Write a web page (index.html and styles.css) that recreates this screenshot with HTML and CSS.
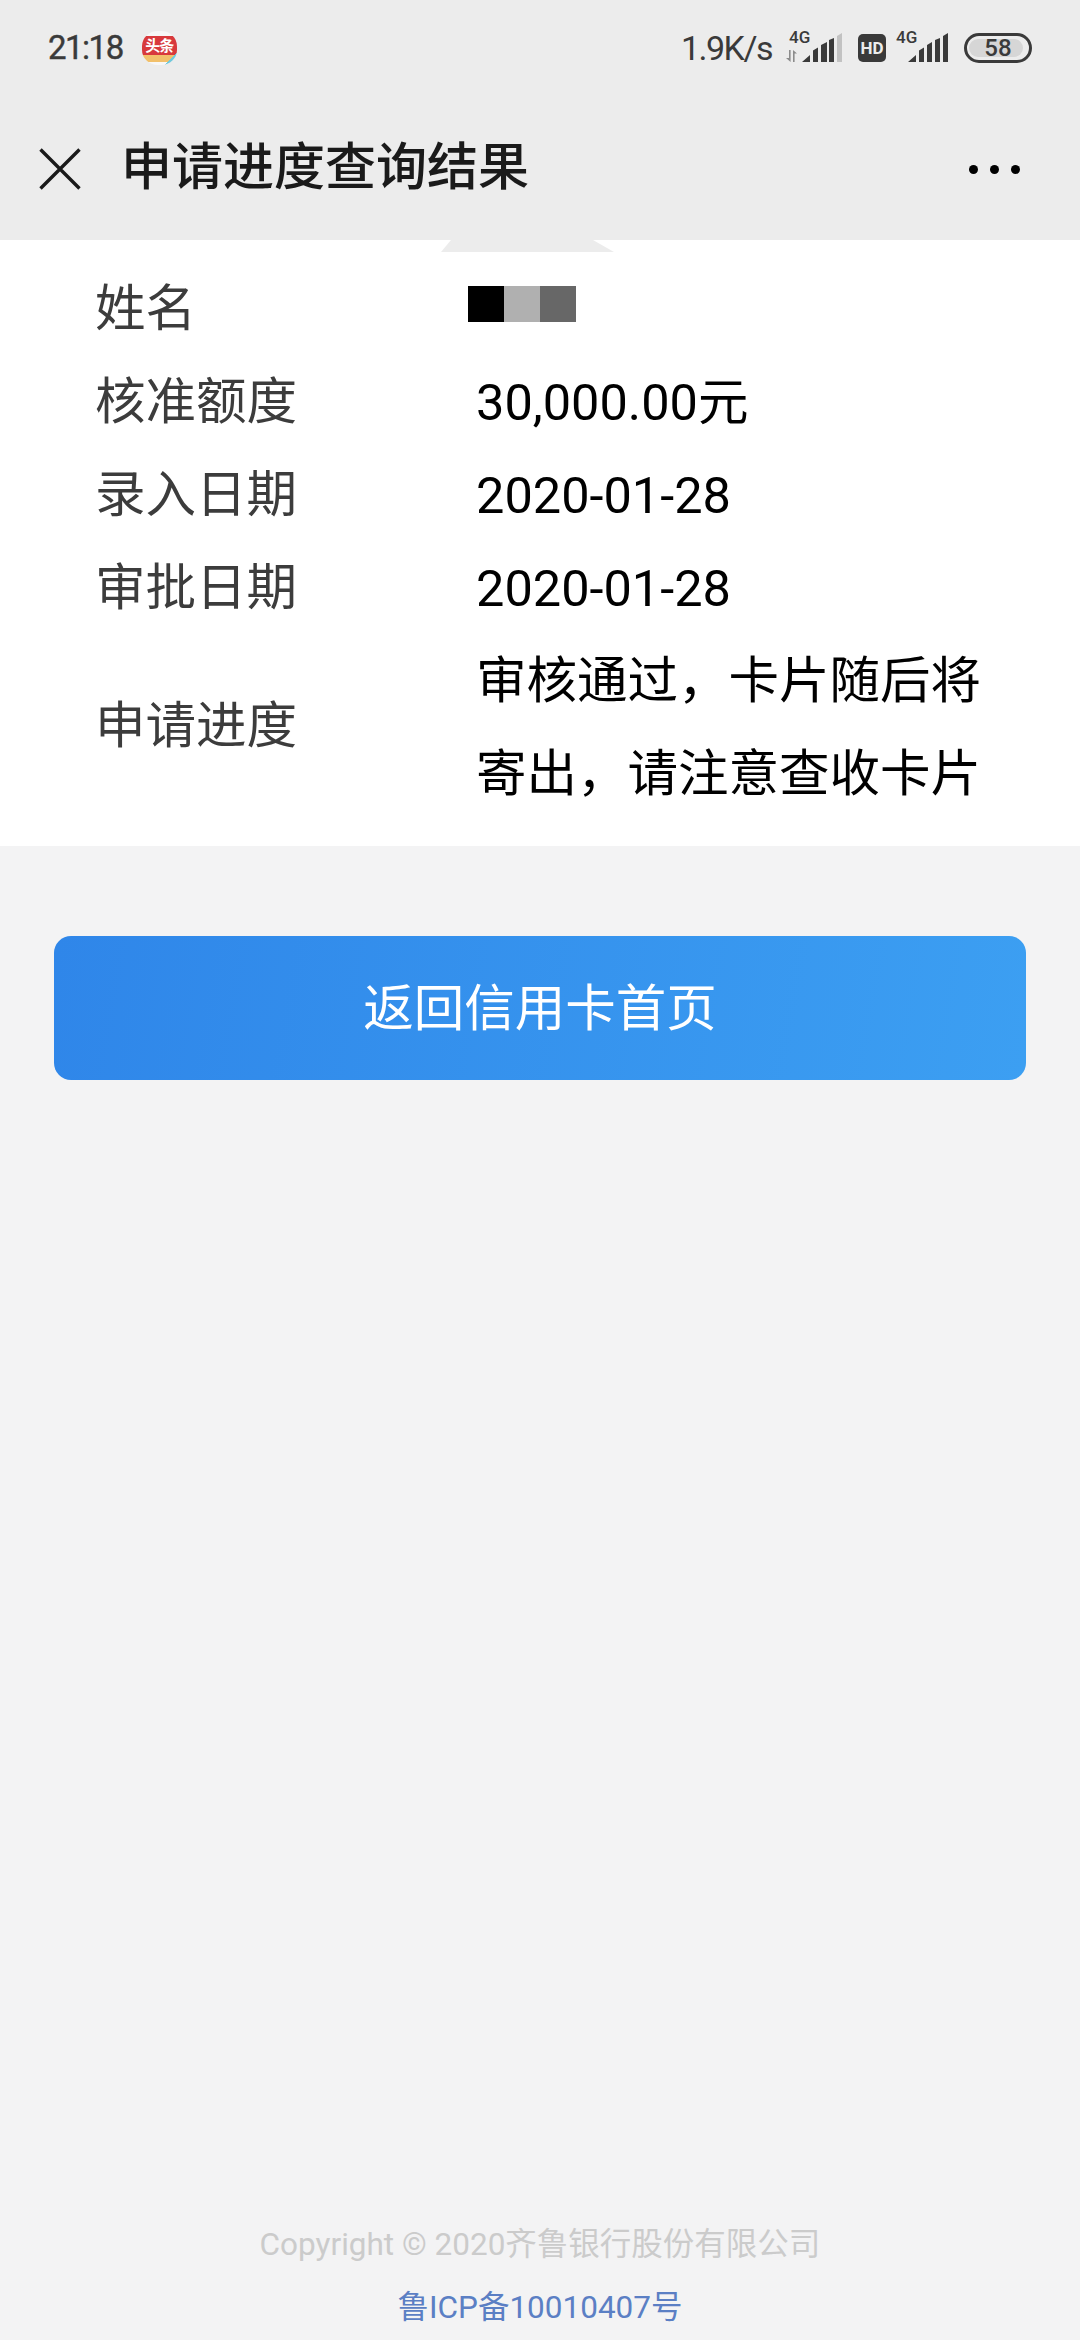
FILE: index.html
```html
<!DOCTYPE html>
<html lang="zh-CN">
<head>
<meta charset="utf-8">
<title>申请进度查询结果</title>
<link rel="stylesheet" href="styles.css">
</head>
<body>
<div class="app">
  <header class="top">
    <div class="status">
      <div class="status-left">
        <span class="time">21:18</span>
        <span class="news-icon"><span class="news-text">头条</span></span>
      </div>
      <div class="status-right">
        <span class="speed">1.9K/s</span>
        <svg class="sig sig-a" width="56" height="36" viewBox="0 -6 56 36">
          <text x="3" y="11" class="g4">4G</text>
          <path d="M3 18h1.600v12L0 26h3zM7 30h1.600V21.500h2.400L7 18z" fill="#8c8c8c"/>
          <path d="M16 30l8-7v7zM27 18.500l5-3V30h-5zM35 13l6-3v20h-6zM43 8l5-2v24h-5z" fill="#3a3a3a"/>
          <path d="M51 4l5-3v29h-5z" fill="#c2c2c2"/>
        </svg>
        <span class="hd">HD</span>
        <svg class="sig sig-b" width="52" height="36" viewBox="0 -6 52 36">
          <text x="0" y="11" class="g4">4G</text>
          <path d="M12 30l8-7v7zM23 18.500l5-3V30h-5zM31 13l5-3v20h-5zM39 8l5-2v24h-5zM47 4l5-3v29h-5z" fill="#3a3a3a"/>
        </svg>
        <span class="battery"><span class="battery-fill"></span><span class="battery-num">58</span></span>
      </div>
    </div>
    <div class="nav">
      <svg class="close" width="42" height="42" viewBox="0 0 42 42"><path d="M1.500 1.500l39 39M40.500 1.500l-39 39" stroke="#1a1a1a" stroke-width="3.4" fill="none"/></svg>
      <h1 class="title">申请进度查询结果</h1>
      <div class="more"><i></i><i></i><i></i></div>
    </div>
  </header>
  <section class="card">
    <span class="notch"></span>
    <div class="row"><span class="label">姓名</span><span class="mask"><i class="m1"></i><i class="m2"></i><i class="m3"></i></span></div>
    <div class="row"><span class="label">核准额度</span><span class="value">30,000.00元</span></div>
    <div class="row"><span class="label">录入日期</span><span class="value">2020-01-28</span></div>
    <div class="row"><span class="label">审批日期</span><span class="value">2020-01-28</span></div>
    <div class="row tall"><span class="label">申请进度</span><span class="value multi">审核通过，卡片随后将寄出，请注意查收卡片</span></div>
  </section>
  <div class="btn">返回信用卡首页</div>
  <footer class="foot">
    <p class="copy">Copyright © 2020齐鲁银行股份有限公司</p>
    <p class="icp">鲁ICP备10010407号</p>
  </footer>
</div>
</body>
</html>
```
FILE: styles.css
```css
* { box-sizing: border-box; margin: 0; padding: 0; }
html, body { width: 1080px; height: 2340px; overflow: hidden; }
body { font-family: Roboto, "Noto Sans CJK SC", sans-serif; background: #f3f3f4; }
.app { width: 1080px; height: 2340px; display: flex; flex-direction: column; }
.top { height: 240px; background: #ececec; display: flex; flex-direction: column; }
.status { height: 96px; padding: 0 48px; display: flex; justify-content: space-between; align-items: center; color: #3a3a3a; }
.status-left { display: flex; align-items: center; gap: 19px; }
.time { font-size: 33px; font-weight: 400; line-height: 40px; letter-spacing: -1.5px; -webkit-text-stroke: .4px #3a3a3a; }
.news-icon { width: 35px; height: 34px; border-radius: 45%; background: linear-gradient(135deg, transparent 82%, #6fc9dc 82%), linear-gradient(#f7f7f7 0 14%, #d8393c 14% 70%, #f2c06a 70% 90%, #f7f7f7 90%); display: flex; justify-content: center; overflow: hidden; }
.news-text { color: #fff; font-size: 15px; font-weight: 700; line-height: 30px; letter-spacing: -1px; height: 30px; }
.status-right { display: flex; align-items: center; }
.speed { font-size: 34px; line-height: 40px; letter-spacing: -1.5px; margin-right: 14px; }
.sig { display: block; flex: none; margin-bottom: 8px; }
.sig-a { margin-right: 16px; }
.sig-b { margin-right: 16px; }
.g4 { font: 500 17px Roboto, sans-serif; fill: #3a3a3a; }
.hd { width: 28px; height: 28px; background: #3a3a3a; color: #ececec; border-radius: 5px; font-size: 17px; font-weight: 700; line-height: 28px; text-align: center; margin-right: 10px; }
.battery { position: relative; width: 68px; height: 30px; border: 3.500px solid #3a3a3a; border-radius: 15px; display: flex; align-items: center; justify-content: center; overflow: hidden; }
.battery-fill { position: absolute; top: 3px; bottom: 3px; left: 2px; width: 54px; background: #d6d6d6; border-radius: 10px; }
.battery-num { position: relative; font-size: 24px; font-weight: 500; line-height: 22px; }
.nav { height: 144px; padding: 0 60px 0 39px; display: flex; align-items: center; }
.close { flex: none; margin-top: 1px; }
.title { flex: 1; margin-left: 40px; font-size: 51px; font-weight: 500; color: #1a1a1a; line-height: 60px; }
.more { display: flex; gap: 12px; margin-top: 3px; }
.more i { width: 9px; height: 9px; border-radius: 50%; background: #000; }
.card { position: relative; height: 606px; background: #fff; padding: 17px 0 0 95px; }
.notch { position: absolute; left: 441px; top: 0; width: 173px; height: 12px; background: #ececec; clip-path: polygon(10px 0, 152px 0, 173px 100%, 0 100%); }
.row { height: 93px; display: flex; align-items: center; }
.label { width: 381px; font-size: 50.500px; color: #3c3c3c; flex: none; }
.value { font-size: 50.500px; color: #000; line-height: 70px; padding-top: 13px; }
.tall { height: 186px; margin-top: -1px; }
.multi { width: 516px; line-height: 93px; padding-top: 12px; }
.mask { display: flex; margin-left: -8px; }
.mask i { width: 36px; height: 36px; }
.m1 { background: #000; }
.m2 { background: #b0b0b0; }
.m3 { background: #676767; }
.btn { margin: 90px 54px 0; height: 144px; padding-bottom: 8px; border-radius: 17px; background: linear-gradient(100deg, #2f86e9, #3c9ff2); color: #fff; font-size: 50.500px; display: flex; align-items: center; justify-content: center; }
.foot { margin-top: auto; padding-bottom: 12px; text-align: center; }
.copy { font-size: 31.500px; line-height: 40px; color: #cbcbcb; }
.icp { font-size: 31.500px; line-height: 40px; margin-top: 23px; color: #5b7fc4; }
```
